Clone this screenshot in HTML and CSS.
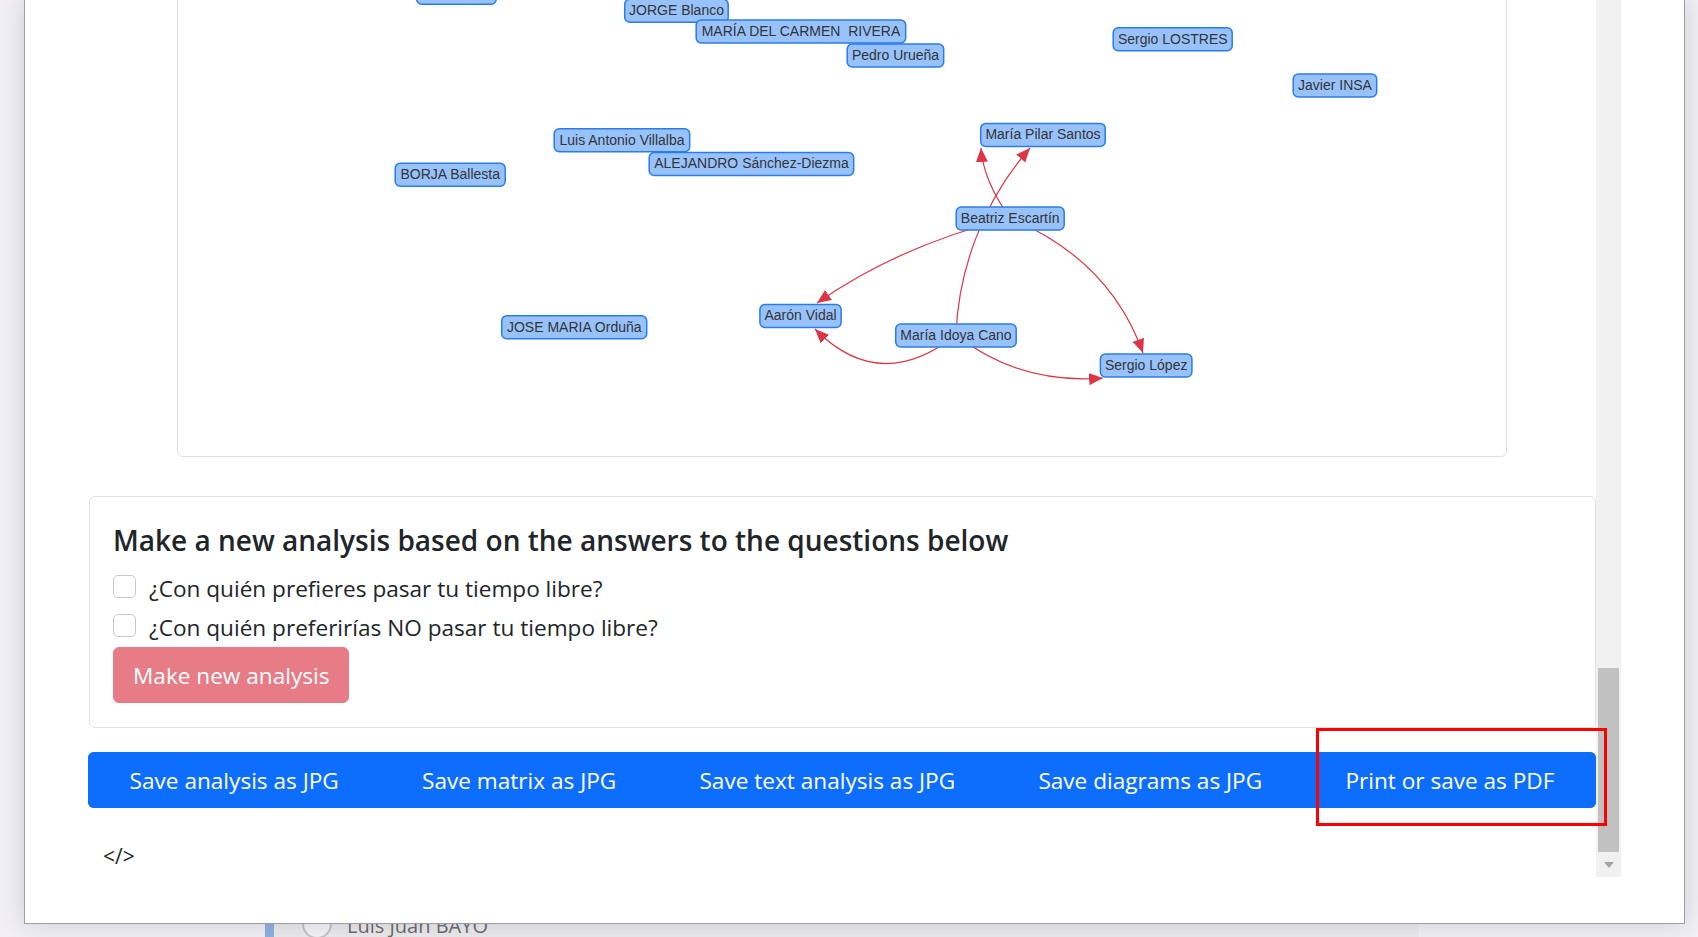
FILE: index.html
```html
<!DOCTYPE html>
<html lang="es">
<head>
<meta charset="utf-8">
<title>Sociogram analysis</title>
<link rel="stylesheet" href="styles.css">
</head>
<body>
  <div class="under-row">
    <span class="under-radio"></span>
    <span class="under-name">Luis Juan BAYO</span>
  </div>

  <div class="modal">
    <div class="frame">
      <div class="viewport">
        <div class="container">
          <div class="graph-card">
            <svg class="graph" viewBox="178 -99 1328 555" width="1328" height="555" xmlns="http://www.w3.org/2000/svg">
              <defs>
                <marker id="arr" markerWidth="14" markerHeight="12" refX="14" refY="6" orient="auto" markerUnits="userSpaceOnUse">
                  <path d="M0,0 L14,6 L0,12 z" class="arrow-head"/>
                </marker>
              </defs>
              <path class="edge" d="M956,335 C958,275 980,205 1030,148" marker-end="url(#arr)"/>
              <path class="edge" d="M1010,218 Q983,180 981,148" marker-end="url(#arr)"/>
              <path class="edge" d="M1010,218 Q900,245 817,303" marker-end="url(#arr)"/>
              <path class="edge" d="M1010,218 Q1110,260 1143,353" marker-end="url(#arr)"/>
              <path class="edge" d="M956,335 Q880,395 815,329" marker-end="url(#arr)"/>
              <path class="edge" d="M956,335 Q1020,385 1103,378" marker-end="url(#arr)"/>

              <g class="node"><rect x="416.7" y="-18.8" width="79.5" height="23" rx="5"/></g>
              <g class="node"><rect x="624.7" y="-0.8" width="103.5" height="23" rx="5"/><text x="676.5" y="15">JORGE Blanco</text></g>
              <g class="node"><rect x="696.2" y="20" width="209.5" height="23" rx="5"/><text class="pre" x="801" y="35.8">MARÍA DEL CARMEN  RIVERA</text></g>
              <g class="node"><rect x="847.2" y="44" width="96.5" height="23" rx="5"/><text x="895.5" y="59.8">Pedro Urueña</text></g>
              <g class="node"><rect x="1113.2" y="27.7" width="119" height="23" rx="5"/><text x="1172.75" y="43.5">Sergio LOSTRES</text></g>
              <g class="node"><rect x="1293.2" y="74" width="83.5" height="23" rx="5"/><text x="1335" y="89.8">Javier INSA</text></g>
              <g class="node"><rect x="980.7" y="123.4" width="124.5" height="23" rx="5"/><text x="1043" y="139.2">María Pilar Santos</text></g>
              <g class="node"><rect x="554.2" y="128.7" width="135.5" height="23" rx="5"/><text x="622" y="144.5">Luis Antonio Villalba</text></g>
              <g class="node"><rect x="649.2" y="152.5" width="204.5" height="23" rx="5"/><text x="751.5" y="168.3">ALEJANDRO Sánchez-Diezma</text></g>
              <g class="node"><rect x="395.2" y="163.2" width="110" height="23" rx="5"/><text x="450.25" y="179">BORJA Ballesta</text></g>
              <g class="node"><rect x="956.2" y="207" width="108" height="23" rx="5"/><text x="1010.25" y="222.8">Beatriz Escartín</text></g>
              <g class="node"><rect x="501.7" y="315.7" width="145" height="23" rx="5"/><text x="574.25" y="331.5">JOSE MARIA Orduña</text></g>
              <g class="node"><rect x="759.9" y="304.5" width="81.2" height="23" rx="5"/><text x="800.55" y="320.3">Aarón Vidal</text></g>
              <g class="node"><rect x="895.7" y="324" width="120.5" height="23" rx="5"/><text x="956" y="339.8">María Idoya Cano</text></g>
              <g class="node"><rect x="1100.4" y="354" width="91.5" height="23" rx="5"/><text x="1146.2" y="369.8">Sergio López</text></g>
            </svg>
          </div>

          <div class="form-card">
            <h3 class="form-title">Make a new analysis based on the answers to the questions below</h3>
            <label class="check-row">
              <input type="checkbox" class="check">
              <span class="check-label">¿Con quién prefieres pasar tu tiempo libre?</span>
            </label>
            <label class="check-row">
              <input type="checkbox" class="check">
              <span class="check-label">¿Con quién preferirías NO pasar tu tiempo libre?</span>
            </label>
            <button class="btn-new" disabled>Make new analysis</button>
          </div>

          <div class="btn-bar">
            <button class="bar-btn">Save analysis as JPG</button>
            <button class="bar-btn">Save matrix as JPG</button>
            <button class="bar-btn">Save text analysis as JPG</button>
            <button class="bar-btn">Save diagrams as JPG</button>
            <button class="bar-btn">Print or save as PDF</button>
          </div>

          <div class="code-tag">&lt;/&gt;</div>
        </div>
      </div>
      <div class="scrollbar">
        <div class="sb-space"></div>
        <div class="sb-thumb"></div>
        <div class="sb-down"><span class="sb-tri"></span></div>
      </div>
    </div>
  </div>

  <div class="highlight"></div>
</body>
</html>
```

FILE: styles.css
```css
* { box-sizing: border-box; }

html, body {
  margin: 0;
  padding: 0;
}

body {
  width: 1698px;
  height: 937px;
  position: relative;
  overflow: hidden;
  background: #f2f0f6;
  font-family: "Open Sans", "Noto Sans", sans-serif;
  color: #212529;
}

/* underlying page, visible below the modal */
.under-row {
  position: absolute;
  left: 265px;
  top: 894px;
  width: 1154px;
  height: 60px;
  background: #ebebeb;
  border-left: 9px solid #8fb0e0;
  display: flex;
  align-items: center;
  padding-left: 28px;
  gap: 15px;
}

.under-radio {
  width: 30px;
  height: 30px;
  border-radius: 50%;
  border: 2px solid #c4c4c4;
  background: #f4f4f4;
}

.under-name {
  font-size: 20px;
  line-height: 28px;
  padding-top: 4px;
  color: #6a6a6a;
}

/* modal window */
.modal {
  position: absolute;
  left: 24px;
  top: -1px;
  width: 1661px;
  height: 925px;
  background: #fff;
  border: 1px solid #9e9e9e;
  box-shadow: 0 0 22px rgba(70, 60, 100, 0.2);
}

.frame {
  display: flex;
  width: 1596px;
  height: 877px;
}

.viewport {
  flex: 1;
  height: 877px;
  overflow: hidden;
}

.container {
  margin-left: 63px;
  width: 1508px;
}

/* graph card */
.graph-card {
  width: 1330px;
  height: 557px;
  margin: -100px auto 0;
  border: 1px solid #dee2e6;
  border-radius: 6px;
  background: #fff;
}

.graph {
  display: block;
}

.edge {
  fill: none;
  stroke: #dc3545;
  stroke-width: 1.2;
}

.arrow-head {
  fill: #dc3545;
}

.node rect {
  fill: #97c2fc;
  stroke: #2b7ce9;
  stroke-width: 1.5;
}

.node text {
  font-family: "Liberation Sans", Arial, sans-serif;
  font-size: 14px;
  fill: #343434;
  text-anchor: middle;
}

.node text.pre {
  white-space: pre;
}

/* form card */
.form-card {
  margin: 39px 0 0 1px;
  width: 1507px;
  border: 1px solid #dfe2e6;
  border-radius: 6px;
  padding: 26px 23px 24px;
  display: flex;
  flex-direction: column;
  align-items: flex-start;
}

.form-title {
  margin: 0 0 15px;
  font-size: 28px;
  font-weight: 600;
  line-height: 34px;
  color: #212529;
}

.check-row {
  display: flex;
  align-items: flex-start;
  gap: 13px;
  height: 33px;
  margin-bottom: 6px;
}

.check-row:last-of-type {
  margin-bottom: 0;
}

.check {
  appearance: none;
  -webkit-appearance: none;
  margin: 3px 0 0;
  width: 23px;
  height: 23px;
  border: 1px solid #c4c7cb;
  border-radius: 5px;
  background: #fff;
  flex: none;
}

.check-label {
  font-size: 22.6px;
  line-height: 33px;
  color: #212529;
}

.btn-new {
  margin-top: 3px;
  height: 56px;
  padding: 0 19px;
  border: 1px solid #e87c86;
  border-radius: 6px;
  background: #e87c86;
  color: #fff;
  font-family: inherit;
  font-size: 22.6px;
  line-height: 56px;
}

/* action bar */
.btn-bar {
  margin-top: 24px;
  display: flex;
  height: 56px;
  background: #0d6efd;
  border-radius: 6px;
  overflow: hidden;
}

.bar-btn {
  flex: 1 1 auto;
  padding: 0 20px;
  border: 0;
  background: #0d6efd;
  color: #fff;
  font-family: inherit;
  font-size: 22.6px;
  line-height: 58px;
  white-space: nowrap;
  text-align: center;
}

.code-tag {
  margin-top: 34px;
  padding-left: 15px;
  font-size: 21px;
  line-height: 29px;
  color: #212529;
}

/* fake scrollbar */
.scrollbar {
  width: 25px;
  height: 877px;
  background: #f1f1f1;
  display: flex;
  flex-direction: column;
  align-items: center;
}

.sb-space {
  flex: 1;
}

.sb-thumb {
  width: 21px;
  height: 184px;
  background: #c1c1c1;
}

.sb-down {
  height: 25px;
  width: 25px;
  display: flex;
  justify-content: center;
  padding-top: 10px;
}

.sb-tri {
  width: 0;
  height: 0;
  border-left: 5.5px solid transparent;
  border-right: 5.5px solid transparent;
  border-top: 6px solid #a3a3a3;
}

/* annotation */
.highlight {
  position: absolute;
  left: 1316px;
  top: 728px;
  width: 291px;
  height: 98px;
  border: 3px solid #ff0000;
}
```
